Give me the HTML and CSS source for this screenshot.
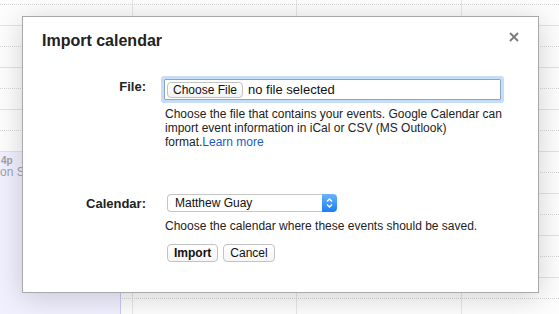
FILE: index.html
```html
<!DOCTYPE html>
<html lang="en">
<head>
    <meta charset="UTF-8">
    <meta name="viewport" content="width=device-width, initial-scale=1.0">
    <title>Import calendar</title>
    <link rel="stylesheet" href="styles.css">
</head>
<body>
    <!-- Calendar week view behind the dialog -->
    <div class="calendar">
        <div class="rows">
            <div class="slot"></div>
            <div class="slot"></div>
            <div class="slot"></div>
            <div class="slot"></div>
            <div class="slot"></div>
            <div class="slot"></div>
            <div class="slot"></div>
            <div class="slot"></div>
            <div class="slot"></div>
            <div class="slot"></div>
            <div class="slot"></div>
            <div class="slot"></div>
            <div class="slot"></div>
            <div class="slot"></div>
            <div class="slot"></div>
            <div class="slot"></div>
        </div>
        <div class="event">
            <b>4p</b>
            <span>on Sunday</span>
        </div>
    </div>

    <div class="dialog">
        <h1 class="dialog-title">Import calendar</h1>
        <button class="close-btn" aria-label="Close">
            <svg width="10" height="10" viewBox="0 0 10 10">
                <path d="M1 1 L9 9 M9 1 L1 9" stroke="#7a7a7a" stroke-width="1.8" fill="none"/>
            </svg>
        </button>

        <div class="form">
            <div class="field-label file-label">File:</div>
            <div class="field-body">
                <div class="file-box">
                    <span class="file-btn">Choose File</span>
                    <span class="file-name">no file selected</span>
                </div>
                <div class="hint">
                    Choose the file that contains your events. Google Calendar can
                    import event information in iCal or CSV (MS Outlook)
                    format.<a href="#" class="link">Learn more</a>
                </div>
            </div>

            <div class="field-label cal-label">Calendar:</div>
            <div class="field-body">
                <div class="select">
                    <span class="select-value">Matthew Guay</span>
                    <span class="select-arrows">
                        <svg width="15" height="18" viewBox="0 0 15 18">
                            <path d="M5 7.5 L7.5 5 L10 7.5 M5 10.5 L7.5 13 L10 10.5" stroke="#fff" stroke-width="1.3" fill="none"/>
                        </svg>
                    </span>
                </div>
                <div class="hint hint-cal">Choose the calendar where these events should be saved.</div>
                <div class="actions">
                    <button class="btn btn-primary">Import</button>
                    <button class="btn">Cancel</button>
                </div>
            </div>
        </div>
    </div>
</body>
</html>
```

FILE: styles.css
```css
:root {
    --text-color: #222;
    --line-color: #e2e2e2;
    --link-color: #1a5cc6;
}

body {
    margin: 0;
    font-family: "Liberation Sans", Arial, sans-serif;
    color: var(--text-color);
    background: #fff;
}

/* background week grid */
.calendar {
    position: relative;
    height: 314px;
    overflow: hidden;
    background-color: #fdfdfd;
    background-image: linear-gradient(to right,
        transparent 132px, #e6e6e6 132px, #e6e6e6 133px, transparent 133px,
        transparent 296px, #e6e6e6 296px, #e6e6e6 297px, transparent 297px,
        transparent 461px, #e6e6e6 461px, #e6e6e6 462px, transparent 462px);
}

.rows {
    margin-top: -16px;
}

.slot {
    height: 20px;
    border-bottom: 1px solid var(--line-color);
}

.slot:nth-child(odd) {
    border-bottom: 1px dotted #d6d6d6;
}

.event {
    position: absolute;
    left: 0;
    top: 152px;
    bottom: 0;
    width: 120px;
    background: #f0f0ff;
    border-right: 1px solid #c8c8f4;
    color: #a0a0a8;
    padding-top: 3px;
    line-height: 11px;
}

.event b {
    display: block;
    font-size: 10px;
    padding-left: 1px;
}

.event span {
    display: block;
    font-size: 12px;
    line-height: 12px;
}

/* dialog */
.dialog {
    position: absolute;
    left: 22px;
    top: 16px;
    width: 517px;
    box-sizing: border-box;
    background: #fff;
    border: 1px solid #a9a9a9;
    box-shadow: 0 4px 26px rgba(0, 0, 0, 0.18);
    padding: 14px 19px 30px;
}

.dialog-title {
    margin: 0;
    font-size: 16px;
    line-height: 20px;
    font-weight: bold;
    color: #222;
}

.close-btn {
    position: absolute;
    top: 15px;
    right: 19px;
    width: 10px;
    height: 10px;
    padding: 0;
    border: none;
    background: none;
    cursor: pointer;
    display: block;
}

.close-btn svg {
    display: block;
}

.form {
    display: grid;
    grid-template-columns: 104px 1fr;
    column-gap: 18px;
    row-gap: 45px;
    margin-top: 28px;
}

.field-label {
    text-align: right;
    font-size: 13px;
    font-weight: bold;
    color: #222;
}

.file-label {
    line-height: 16px;
}

.cal-label {
    line-height: 20px;
}

.file-box {
    display: flex;
    align-items: center;
    width: 337px;
    height: 21px;
    box-sizing: border-box;
    padding: 0 2px;
    border: 1px solid #8fa5be;
    border-radius: 1px;
    box-shadow: 0 0 0 3px #c6ddf8;
}

.file-btn {
    height: 16px;
    box-sizing: border-box;
    padding: 0 5px;
    border: 1px solid #c2c2c2;
    border-radius: 4px;
    background: linear-gradient(#fff, #f3f3f3);
    font-size: 12px;
    line-height: 14px;
    color: #111;
}

.file-name {
    margin-left: 5px;
    font-size: 13px;
    color: #111;
}

.hint {
    margin: 7px 0 0 1px;
    width: 345px;
    font-size: 12px;
    line-height: 14px;
    color: var(--text-color);
}

.hint-cal {
    width: auto;
}

.link {
    color: var(--link-color);
    text-decoration: none;
}

.select {
    display: flex;
    width: 170px;
    height: 18px;
    margin-left: 3px;
}

.select-value {
    flex: 1;
    box-sizing: border-box;
    border: 1px solid #c6c6c6;
    border-right: none;
    border-radius: 4px 0 0 4px;
    padding-left: 7px;
    font-size: 12px;
    line-height: 16px;
    color: #111;
}

.select-arrows {
    width: 15px;
    height: 18px;
    border-radius: 0 4px 4px 0;
    background: linear-gradient(#6cb2fb, #1b7ef5);
}

.select-arrows svg {
    display: block;
}

.actions {
    display: flex;
    gap: 5px;
    margin: 11px 0 0 3px;
}

.btn {
    height: 18px;
    box-sizing: border-box;
    padding: 0 6px;
    border: 1px solid #c3c3c3;
    border-radius: 4px;
    background: linear-gradient(#fff, #f5f5f5);
    font-family: inherit;
    font-size: 12px;
    line-height: 16px;
    color: #111;
    cursor: pointer;
}

.btn-primary {
    font-weight: bold;
}
```
